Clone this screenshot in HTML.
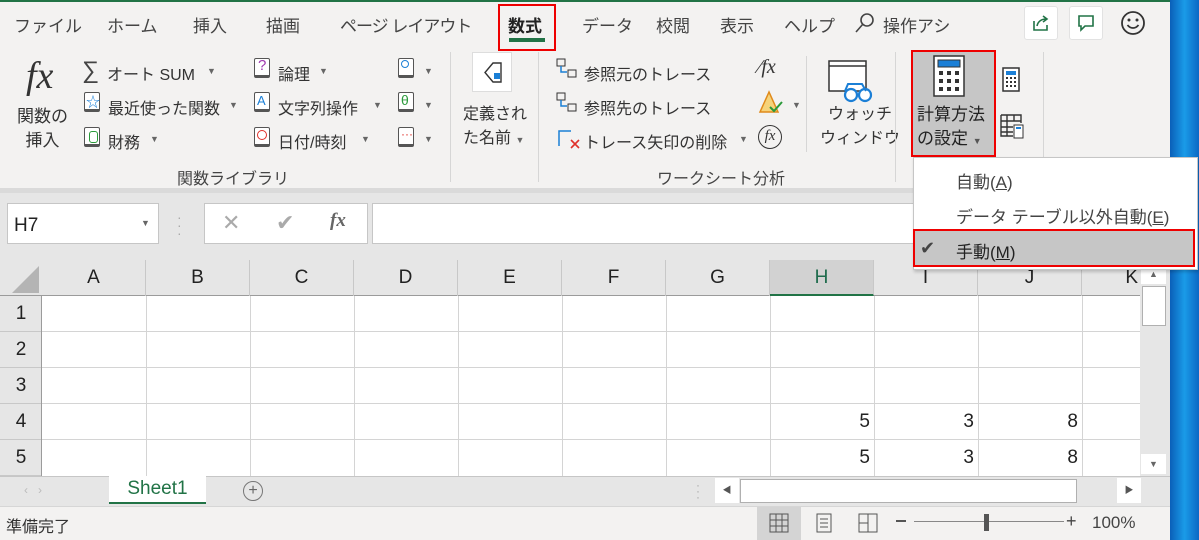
<!DOCTYPE html>
<html><head><meta charset="utf-8"><style>
*{margin:0;padding:0;box-sizing:border-box}
body{width:1199px;height:540px;overflow:hidden;position:relative;background:#f3f2f1;font-family:"Liberation Sans","Noto Sans CJK JP",sans-serif;color:#333}
.a{position:absolute;white-space:nowrap}
.t{font-size:17px;top:12px;color:#444}
.r{font-size:16px;color:#333}
.dd{font-size:9px;color:#666}
.col{position:absolute;top:260px;height:36px;border-right:1px solid #c8c8c8;text-align:center;font-size:19px;line-height:36px;color:#222}
.row{position:absolute;left:0;width:42px;height:36px;border-bottom:1px solid #c8c8c8;text-align:center;font-size:19px;line-height:36px;color:#222;background:#e6e6e6}
.n{position:absolute;font-size:19px;color:#222;text-align:right;width:100px}
.ic{position:absolute;width:16px;height:20px;border:1.5px solid #555;border-bottom-width:3px;border-radius:2px;background:#fff}
</style></head><body>
<div class="a" style="left:0;top:0;width:1199px;height:2px;background:#217346"></div>
<div class="a" style="left:1170px;top:0;width:29px;height:540px;background:linear-gradient(90deg,#0a5fb8,#1a9be8 50%,#0b68c4)"></div>
<!-- tabs -->
<div class="a t" style="left:14px">ファイル</div>
<div class="a t" style="left:107px">ホーム</div>
<div class="a t" style="left:193px">挿入</div>
<div class="a t" style="left:266px">描画</div>
<div class="a t" style="left:340px;letter-spacing:-1px">ページ レイアウト</div>
<div class="a t" style="left:508px;font-weight:bold;color:#222">数式</div>
<div class="a" style="left:509px;top:38px;width:36px;height:4px;background:#217346"></div>
<div class="a" style="left:498px;top:4px;width:58px;height:47px;border:2px solid #e00"></div>
<div class="a t" style="left:582px">データ</div>
<div class="a t" style="left:656px">校閲</div>
<div class="a t" style="left:720px">表示</div>
<div class="a t" style="left:784px">ヘルプ</div>
<svg class="a" style="left:853px;top:11px" width="24" height="24"><circle cx="14" cy="9" r="6" fill="none" stroke="#444" stroke-width="1.6"/><line x1="10" y1="13" x2="3" y2="21" stroke="#444" stroke-width="1.6"/></svg>
<div class="a t" style="left:883px;width:130px;overflow:hidden">操作アシ</div>
<div class="a" style="left:1024px;top:6px;width:34px;height:34px;background:#fff;border:1px solid #e2e2e2;border-radius:3px"></div>
<svg class="a" style="left:1031px;top:13px" width="20" height="20"><path d="M3 8v9h13v-5" fill="none" stroke="#217346" stroke-width="1.6"/><path d="M6 13c1-5 5-7 9-7M12 3l4 3-4 3" fill="none" stroke="#217346" stroke-width="1.6"/></svg>
<div class="a" style="left:1069px;top:6px;width:34px;height:34px;background:#fff;border:1px solid #e2e2e2;border-radius:3px"></div>
<svg class="a" style="left:1076px;top:13px" width="20" height="20"><path d="M3 3h14v10H9l-4 4v-4H3z" fill="none" stroke="#217346" stroke-width="1.6"/></svg>
<svg class="a" style="left:1120px;top:10px" width="26" height="26"><circle cx="13" cy="13" r="11" fill="none" stroke="#333" stroke-width="1.8"/><circle cx="9" cy="10" r="1.5" fill="#333"/><circle cx="17" cy="10" r="1.5" fill="#333"/><path d="M7.5 15c3 4 8 4 11 0" fill="none" stroke="#333" stroke-width="1.8"/></svg>

<!-- ribbon group 1 -->
<div class="a" style="left:26px;top:54px;font-family:'Liberation Serif',serif;font-style:italic;font-size:38px;color:#333">fx</div>
<div class="a r" style="left:17px;top:105px;line-height:24px;text-align:center;font-size:17px">関数の<br>挿入</div>
<div class="a" style="left:82px;top:57px;font-size:24px;color:#444">∑</div>
<div class="a r" style="left:107px;top:61px">オート SUM</div><div class="a dd" style="left:207px;top:66px">▼</div>
<div class="ic" style="left:84px;top:92px"></div><div class="a" style="left:86px;top:92px;font-size:14px;color:#1b7fd6">☆</div>
<div class="a r" style="left:108px;top:95px">最近使った関数</div><div class="a dd" style="left:229px;top:100px">▼</div>
<div class="ic" style="left:84px;top:127px"></div><div class="a" style="left:89px;top:131px;width:9px;height:12px;border:1.5px solid #2a9a3a;border-radius:3px"></div>
<div class="a r" style="left:108px;top:129px">財務</div><div class="a dd" style="left:150px;top:134px">▼</div>
<div class="ic" style="left:254px;top:58px"></div><div class="a" style="left:258px;top:57px;font-size:15px;color:#a03ab0">?</div>
<div class="a r" style="left:278px;top:61px">論理</div><div class="a dd" style="left:319px;top:66px">▼</div>
<div class="ic" style="left:254px;top:92px"></div><div class="a" style="left:257px;top:93px;font-size:13px;color:#1b7fd6">A</div>
<div class="a r" style="left:278px;top:95px">文字列操作</div><div class="a dd" style="left:373px;top:100px">▼</div>
<div class="ic" style="left:254px;top:127px"></div><div class="a" style="left:257px;top:130px;width:10px;height:10px;border:1.5px solid #e0302a;border-radius:50%"></div>
<div class="a r" style="left:278px;top:129px">日付/時刻</div><div class="a dd" style="left:361px;top:134px">▼</div>
<div class="ic" style="left:398px;top:58px"></div><div class="a" style="left:401px;top:60px;width:8px;height:8px;border:1.5px solid #1b7fd6;border-radius:50%"></div><div class="a dd" style="left:424px;top:66px">▼</div>
<div class="ic" style="left:398px;top:92px"></div><div class="a" style="left:401px;top:92px;font-size:14px;color:#2a9a3a">θ</div><div class="a dd" style="left:424px;top:100px">▼</div>
<div class="ic" style="left:398px;top:127px"></div><div class="a" style="left:401px;top:127px;font-size:12px;color:#e0302a">···</div><div class="a dd" style="left:424px;top:134px">▼</div>
<div class="a" style="left:177px;top:165px;font-size:16px;color:#444">関数ライブラリ</div>
<div class="a" style="left:450px;top:52px;width:1px;height:130px;background:#d6d6d6"></div>
<div class="a" style="left:472px;top:52px;width:40px;height:40px;background:#fff;border:1px solid #ddd"></div>
<svg class="a" style="left:480px;top:60px" width="26" height="26"><path d="M13 3h8v19h-8l-8-9.5z" fill="none" stroke="#333" stroke-width="1.4"/><rect x="14" y="13" width="6" height="6" fill="#1b7fd6"/></svg>
<div class="a r" style="left:463px;top:103px;line-height:24px">定義され<br>た名前 <span style="font-size:9px;color:#666">▼</span></div>
<div class="a" style="left:538px;top:52px;width:1px;height:130px;background:#d6d6d6"></div>
<svg class="a" style="left:556px;top:58px" width="24" height="22"><rect x="1" y="1" width="8" height="7" fill="none" stroke="#333"/><rect x="12" y="12" width="8" height="7" fill="none" stroke="#333"/><path d="M5 8v6h6" fill="none" stroke="#1b7fd6" stroke-width="1.5"/></svg>
<div class="a r" style="left:584px;top:61px">参照元のトレース</div>
<svg class="a" style="left:556px;top:92px" width="24" height="22"><rect x="1" y="1" width="8" height="7" fill="none" stroke="#333"/><rect x="12" y="12" width="8" height="7" fill="none" stroke="#333"/><path d="M5 8v6h6" fill="none" stroke="#1b7fd6" stroke-width="1.5"/></svg>
<div class="a r" style="left:584px;top:95px">参照先のトレース</div>
<svg class="a" style="left:556px;top:126px" width="26" height="24"><path d="M3 20V5h12" fill="none" stroke="#1b7fd6" stroke-width="1.5"/><path d="M15 14l8 8M23 14l-8 8" stroke="#e0302a" stroke-width="1.6"/></svg>
<div class="a r" style="left:584px;top:129px">トレース矢印の削除</div><div class="a dd" style="left:739px;top:134px">▼</div>
<div class="a" style="left:758px;top:56px;font-family:'Liberation Serif',serif;font-style:italic;font-size:20px;color:#333">⁄fx</div>
<svg class="a" style="left:758px;top:90px" width="26" height="26"><path d="M11 2L2 22h18z" fill="#f6d37a" stroke="#e08a1a" stroke-width="1.5"/><path d="M12 17l4 4 8-9" fill="none" stroke="#2a9a3a" stroke-width="2"/></svg><div class="a dd" style="left:792px;top:100px">▼</div>
<div class="a" style="left:758px;top:125px;width:24px;height:24px;border:1.5px solid #333;border-radius:50%;text-align:center;font-family:'Liberation Serif',serif;font-style:italic;font-size:15px;line-height:20px">fx</div>
<div class="a" style="left:657px;top:165px;font-size:16px;color:#444">ワークシート分析</div>
<div class="a" style="left:806px;top:56px;width:1px;height:96px;background:#d6d6d6"></div>
<svg class="a" style="left:828px;top:60px" width="46" height="44"><rect x="1" y="1" width="37" height="30" fill="#fff" stroke="#333" stroke-width="1.5"/><line x1="1" y1="6" x2="38" y2="6" stroke="#333" stroke-width="1.5"/><circle cx="23" cy="35" r="6" fill="#fff" stroke="#1b7fd6" stroke-width="2.2"/><circle cx="37" cy="35" r="6" fill="#fff" stroke="#1b7fd6" stroke-width="2.2"/><path d="M17 31l3-7h14l4 7" fill="none" stroke="#1b7fd6" stroke-width="2"/></svg>
<div class="a r" style="left:820px;top:103px;line-height:24px;text-align:center">ウォッチ<br>ウィンドウ</div>
<div class="a" style="left:895px;top:52px;width:1px;height:130px;background:#d6d6d6"></div>
<div class="a" style="left:911px;top:50px;width:85px;height:107px;background:#c6c6c6;border:2px solid #e00"></div>
<svg class="a" style="left:933px;top:55px" width="34" height="44"><rect x="1" y="1" width="30" height="40" fill="#fff" stroke="#333" stroke-width="1.5"/><rect x="5" y="5" width="22" height="7" fill="#1b7fd6" stroke="#333"/><g fill="#333"><rect x="6" y="16" width="4" height="4"/><rect x="14" y="16" width="4" height="4"/><rect x="22" y="16" width="4" height="4"/><rect x="6" y="24" width="4" height="4"/><rect x="14" y="24" width="4" height="4"/><rect x="22" y="24" width="4" height="4"/><rect x="6" y="32" width="4" height="4"/><rect x="14" y="32" width="4" height="4"/><rect x="22" y="32" width="4" height="4"/></g></svg>
<div class="a r" style="left:917px;top:103px;line-height:24px;color:#222;font-size:17px">計算方法<br>の設定 <span style="font-size:9px;color:#555">▼</span></div>
<svg class="a" style="left:1002px;top:67px" width="20" height="26"><rect x="1" y="1" width="16" height="23" fill="#fff" stroke="#333" stroke-width="1.5"/><rect x="4" y="4" width="10" height="4" fill="#1b7fd6"/><g fill="#333"><rect x="4" y="10" width="2" height="2"/><rect x="8" y="10" width="2" height="2"/><rect x="12" y="10" width="2" height="2"/><rect x="4" y="14" width="2" height="2"/><rect x="8" y="14" width="2" height="2"/><rect x="12" y="14" width="2" height="2"/><rect x="4" y="18" width="2" height="2"/><rect x="8" y="18" width="2" height="2"/><rect x="12" y="18" width="2" height="2"/></g></svg>
<svg class="a" style="left:1000px;top:114px" width="26" height="26"><path d="M1 1h20v8M1 1v21h12M1 7h20M1 13h12M1 18h12M7 1v21M14 1v6" fill="none" stroke="#333" stroke-width="1.4"/><rect x="14" y="11" width="9" height="13" fill="#fff" stroke="#333"/><rect x="16" y="13" width="5" height="2" fill="#1b7fd6"/></svg>
<div class="a" style="left:1043px;top:52px;width:1px;height:105px;background:#d6d6d6"></div>
<div class="a" style="left:0;top:188px;width:1170px;height:5px;background:#dadada"></div>
<div class="a" style="left:0;top:193px;width:1170px;height:67px;background:#e6e6e6"></div>
<div class="a" style="left:7px;top:203px;width:152px;height:41px;background:#fff;border:1px solid #c6c6c6"></div>
<div class="a" style="left:14px;top:215px;font-size:19px;color:#222">H7</div><div class="a dd" style="left:141px;top:218px">▼</div>
<div class="a" style="left:177px;top:213px;color:#aaa;font-size:14px;line-height:8px">·<br>·<br>·</div>
<div class="a" style="left:204px;top:203px;width:164px;height:41px;background:#fff;border:1px solid #c6c6c6"></div>
<div class="a" style="left:222px;top:210px;font-size:22px;color:#aaa">✕</div>
<div class="a" style="left:276px;top:210px;font-size:22px;color:#aaa">✔</div>
<div class="a" style="left:330px;top:210px;font-family:'Liberation Serif',serif;font-style:italic;font-weight:bold;font-size:19px;color:#666">fx</div>
<div class="a" style="left:372px;top:203px;width:800px;height:41px;background:#fff;border:1px solid #c6c6c6"></div>
<div class="a" style="left:0;top:260px;width:1140px;height:36px;background:#e6e6e6;border-bottom:1px solid #9b9b9b"></div>
<svg class="a" style="left:10px;top:264px" width="30" height="30"><path d="M29 2v27H2z" fill="#b4b4b4"/></svg>
<div class="a" style="left:42px;top:296px;width:1098px;height:180px;background:#fff"></div>
<div class="col" style="left:42px;width:104px">A</div>
<div class="col" style="left:146px;width:104px">B</div>
<div class="col" style="left:250px;width:104px">C</div>
<div class="col" style="left:354px;width:104px">D</div>
<div class="col" style="left:458px;width:104px">E</div>
<div class="col" style="left:562px;width:104px">F</div>
<div class="col" style="left:666px;width:104px">G</div>
<div class="col" style="left:770px;width:104px;background:#d2d2d2;color:#1e6b4c;border-bottom:2px solid #217346;height:36px">H</div>
<div class="col" style="left:874px;width:104px">I</div>
<div class="col" style="left:978px;width:104px">J</div>
<div class="col" style="left:1082px;width:58px;text-align:right;padding-right:2px;border-right:none">K</div>
<div class="a" style="left:146px;top:296px;width:1px;height:180px;background:#d4d4d4"></div>
<div class="a" style="left:250px;top:296px;width:1px;height:180px;background:#d4d4d4"></div>
<div class="a" style="left:354px;top:296px;width:1px;height:180px;background:#d4d4d4"></div>
<div class="a" style="left:458px;top:296px;width:1px;height:180px;background:#d4d4d4"></div>
<div class="a" style="left:562px;top:296px;width:1px;height:180px;background:#d4d4d4"></div>
<div class="a" style="left:666px;top:296px;width:1px;height:180px;background:#d4d4d4"></div>
<div class="a" style="left:770px;top:296px;width:1px;height:180px;background:#d4d4d4"></div>
<div class="a" style="left:874px;top:296px;width:1px;height:180px;background:#d4d4d4"></div>
<div class="a" style="left:978px;top:296px;width:1px;height:180px;background:#d4d4d4"></div>
<div class="a" style="left:1082px;top:296px;width:1px;height:180px;background:#d4d4d4"></div>
<div class="a" style="left:42px;top:331px;width:1098px;height:1px;background:#d4d4d4"></div>
<div class="a" style="left:42px;top:367px;width:1098px;height:1px;background:#d4d4d4"></div>
<div class="a" style="left:42px;top:403px;width:1098px;height:1px;background:#d4d4d4"></div>
<div class="a" style="left:42px;top:439px;width:1098px;height:1px;background:#d4d4d4"></div>
<div class="row" style="top:296px">1</div>
<div class="row" style="top:332px">2</div>
<div class="row" style="top:368px">3</div>
<div class="row" style="top:404px">4</div>
<div class="row" style="top:440px">5</div>
<div class="a" style="left:41px;top:296px;width:1px;height:180px;background:#9b9b9b"></div>
<div class="n" style="left:770px;top:411px">5</div><div class="n" style="left:874px;top:411px">3</div><div class="n" style="left:978px;top:411px">8</div>
<div class="n" style="left:770px;top:447px">5</div><div class="n" style="left:874px;top:447px">3</div><div class="n" style="left:978px;top:447px">8</div>
<div class="a" style="left:1140px;top:260px;width:30px;height:216px;background:#e6e6e6"></div>
<div class="a" style="left:1141px;top:264px;width:25px;height:20px;background:#fff;text-align:center;font-size:9px;color:#666;line-height:20px">▲</div>
<div class="a" style="left:1142px;top:286px;width:24px;height:40px;background:#fff;border:1px solid #b0b0b0"></div>
<div class="a" style="left:1141px;top:454px;width:25px;height:20px;background:#fff;text-align:center;font-size:9px;color:#666;line-height:20px">▼</div>
<div class="a" style="left:0;top:476px;width:1170px;height:30px;background:#e6e6e6;border-top:1px solid #c6c6c6"></div>
<div class="a" style="left:24px;top:483px;font-size:12px;color:#bbb">‹ &nbsp; ›</div>
<div class="a" style="left:109px;top:476px;width:97px;height:28px;background:#fff;border-bottom:2px solid #217346;text-align:center;font-size:19px;color:#217346;line-height:26px">Sheet1</div>
<div class="a" style="left:243px;top:481px;width:20px;height:20px;border:1.5px solid #777;border-radius:50%;text-align:center;font-size:16px;line-height:17px;color:#666">+</div>
<div class="a" style="left:696px;top:482px;color:#aaa;font-size:12px;line-height:6px">·<br>·<br>·</div>
<div class="a" style="left:715px;top:478px;width:24px;height:25px;background:#fff;font-size:9px;color:#555;text-align:center;line-height:25px">◀</div>
<div class="a" style="left:740px;top:479px;width:337px;height:24px;background:#fff;border:1px solid #b0b0b0"></div>
<div class="a" style="left:1117px;top:478px;width:24px;height:25px;background:#fff;font-size:9px;color:#555;text-align:center;line-height:25px">▶</div>
<div class="a" style="left:0;top:506px;width:1170px;height:34px;background:#f3f2f1;border-top:1px solid #d6d6d6"></div>
<div class="a" style="left:6px;top:513px;font-size:16px;color:#333">準備完了</div>
<div class="a" style="left:757px;top:507px;width:44px;height:33px;background:#d4d4d4"></div>
<svg class="a" style="left:769px;top:513px" width="20" height="20"><path d="M1 1h18v18H1zM1 7h18M1 13h18M7 1v18M13 1v18" fill="none" stroke="#555"/></svg>
<svg class="a" style="left:814px;top:513px" width="20" height="20"><rect x="3" y="1" width="14" height="18" fill="none" stroke="#555"/><path d="M6 6h8M6 10h8M6 14h8" stroke="#555"/></svg>
<svg class="a" style="left:858px;top:513px" width="20" height="20"><path d="M1 1h18v18H1zM1 10h9M10 1v18" fill="none" stroke="#555"/></svg>
<div class="a" style="left:896px;top:520px;width:10px;height:2px;background:#555"></div>
<div class="a" style="left:914px;top:521px;width:150px;height:1px;background:#888"></div>
<div class="a" style="left:984px;top:514px;width:5px;height:17px;background:#555"></div>
<div class="a" style="left:1066px;top:511px;font-size:18px;color:#444">+</div>
<div class="a" style="left:1092px;top:513px;font-size:17px;color:#444">100%</div>
<div class="a" style="left:913px;top:157px;width:285px;height:113px;background:#fff;border:1px solid #c6c6c6;box-shadow:1px 2px 3px rgba(0,0,0,.2)"></div>
<div class="a" style="left:956px;top:168px;font-size:17px;color:#444">自動(<u>A</u>)</div>
<div class="a" style="left:956px;top:203px;font-size:17px;color:#444">データ テーブル以外自動(<u>E</u>)</div>
<div class="a" style="left:913px;top:229px;width:282px;height:38px;background:#c6c6c6;border:2px solid #e00"></div>
<div class="a" style="left:920px;top:238px;font-size:18px;color:#444">✔</div>
<div class="a" style="left:956px;top:238px;font-size:17px;color:#222">手動(<u>M</u>)</div>
</body></html>
